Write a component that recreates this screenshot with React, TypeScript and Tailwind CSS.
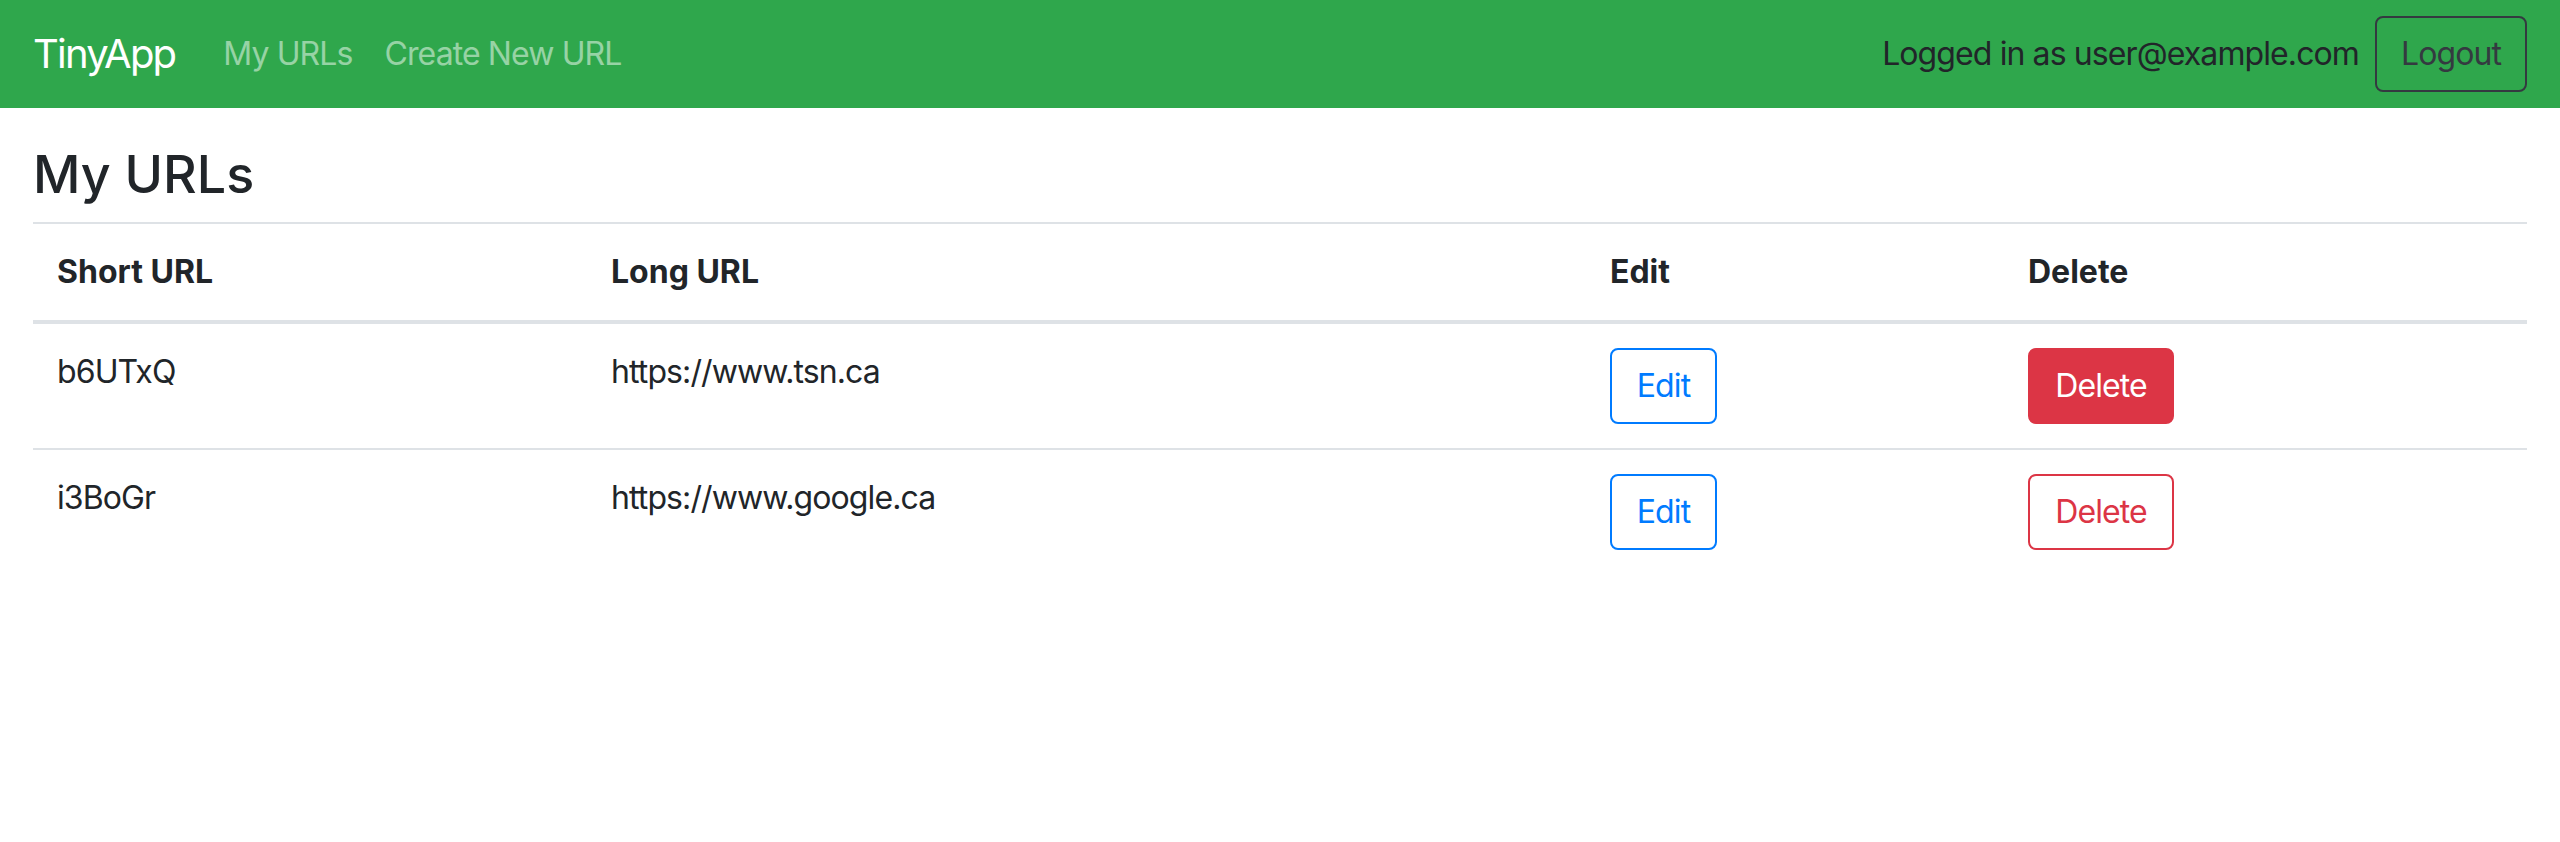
import React from "react";

const rows = [
  { short: "b6UTxQ", long: "https://www.tsn.ca", solid: true },
  { short: "i3BoGr", long: "https://www.google.ca", solid: false },
];

export default function App() {
  return (
    <div className="min-h-screen bg-white font-['Inter','Noto_Sans',sans-serif] text-[#212529]">
      <nav className="flex h-[108px] items-center bg-[#2fa74c] px-[33px]">
        <a className="mr-[32px] text-[40px] leading-[60px] tracking-[-0.045em] text-white">TinyApp</a>
        <a className="px-[16px] text-[32px] leading-[48px] tracking-[-0.028em] text-white/50">My URLs</a>
        <a className="px-[16px] text-[32px] leading-[48px] tracking-[-0.028em] text-white/50">Create New URL</a>
        <div className="ml-auto flex items-center">
          <span className="text-[32px] leading-[48px] tracking-[-0.028em] text-[#212529]">
            Logged in as user@example.com
          </span>
          <button className="ml-[16px] h-[76px] w-[152px] rounded-[8px] border-2 border-[#343a40] text-[32px] leading-[48px] tracking-[-0.028em] text-[#343a40]">
            Logout
          </button>
        </div>
      </nav>
      <main className="px-[33px]">
        <h1 className="mb-[16px] mt-[36px] text-[52px] font-medium leading-[62px] text-[#212529]">
          My URLs
        </h1>
        <table className="w-full table-fixed border-collapse text-[32px] leading-[48px]">
          <colgroup>
            <col className="w-[554px]" />
            <col className="w-[999px]" />
            <col className="w-[418px]" />
            <col />
          </colgroup>
          <thead>
            <tr>
              {["Short URL", "Long URL", "Edit", "Delete"].map((h) => (
                <th
                  key={h}
                  className="border-b-4 border-t-2 border-[#dee2e6] p-[24px] text-left align-bottom font-bold"
                >
                  {h}
                </th>
              ))}
            </tr>
          </thead>
          <tbody className="tracking-[-0.028em]">
            {rows.map((r) => (
              <tr key={r.short}>
                <td className="border-t-2 border-[#dee2e6] p-[24px] align-top">{r.short}</td>
                <td className="border-t-2 border-[#dee2e6] p-[24px] align-top">{r.long}</td>
                <td className="border-t-2 border-[#dee2e6] p-[24px] align-top">
                  <button className="h-[76px] w-[107px] rounded-[8px] border-2 border-[#007bff] text-[32px] leading-[48px] text-[#007bff]">
                    Edit
                  </button>
                </td>
                <td className="border-t-2 border-[#dee2e6] p-[24px] align-top">
                  {r.solid ? (
                    <button className="h-[76px] w-[146px] rounded-[8px] border-2 border-[#dc3545] bg-[#dc3545] text-[32px] leading-[48px] text-white">
                      Delete
                    </button>
                  ) : (
                    <button className="h-[76px] w-[146px] rounded-[8px] border-2 border-[#dc3545] text-[32px] leading-[48px] text-[#dc3545]">
                      Delete
                    </button>
                  )}
                </td>
              </tr>
            ))}
          </tbody>
        </table>
      </main>
    </div>
  );
}
